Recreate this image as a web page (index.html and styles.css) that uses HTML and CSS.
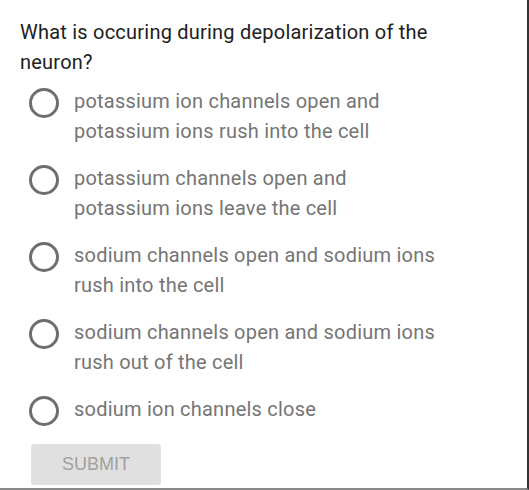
FILE: index.html
```html
<!DOCTYPE html>
<html>
<head>
<meta charset="utf-8">
<link rel="stylesheet" href="styles.css">
</head>
<body>
<div class="frame">
  <div class="question">What is occuring during depolarization of the neuron?</div>
  <div class="options">
    <label class="option"><span class="radio"></span><span class="label">potassium ion channels open and potassium ions rush into the cell</span></label>
    <label class="option"><span class="radio"></span><span class="label">potassium channels open and potassium ions leave the cell</span></label>
    <label class="option"><span class="radio"></span><span class="label">sodium channels open and sodium ions rush into the cell</span></label>
    <label class="option"><span class="radio"></span><span class="label">sodium channels open and sodium ions rush out of the cell</span></label>
    <label class="option"><span class="radio"></span><span class="label">sodium ion channels close</span></label>
  </div>
  <div class="actions"><button class="submit" disabled>SUBMIT</button></div>
</div>
</body>
</html>
```
FILE: styles.css
```css
html, body {
  margin: 0;
  padding: 0;
  background: #ffffff;
}
.frame {
  box-sizing: border-box;
  width: 529px;
  height: 490px;
  border-right: 2px solid #333333;
  border-bottom: 2px solid #8a8a8a;
  padding: 17px 0 0 20px;
  font-family: Roboto, "Noto Sans", sans-serif;
}
.question {
  width: 440px;
  font-size: 20px;
  letter-spacing: 0.22px;
  line-height: 30px;
  color: #212121;
}
.options {
  display: flex;
  flex-direction: column;
  gap: 17px;
  margin-top: 9px;
}
.option {
  display: flex;
  align-items: flex-start;
  gap: 15px;
}
.radio {
  flex: none;
  box-sizing: border-box;
  width: 30px;
  height: 30px;
  margin: 2px 0 0 9px;
  border: 3px solid #6e6e6e;
  border-radius: 50%;
}
.label {
  width: 368px;
  font-size: 20px;
  letter-spacing: 0.22px;
  line-height: 30px;
  color: #757575;
}
.actions {
  margin-top: 18px;
  padding-left: 11px;
}
.submit {
  width: 130px;
  height: 41px;
  border: none;
  border-radius: 3px;
  background: #e0e0e0;
  color: #a0a0a0;
  font-family: "Liberation Sans", Arial, sans-serif;
  font-size: 18px;
  padding: 0;
}
```
